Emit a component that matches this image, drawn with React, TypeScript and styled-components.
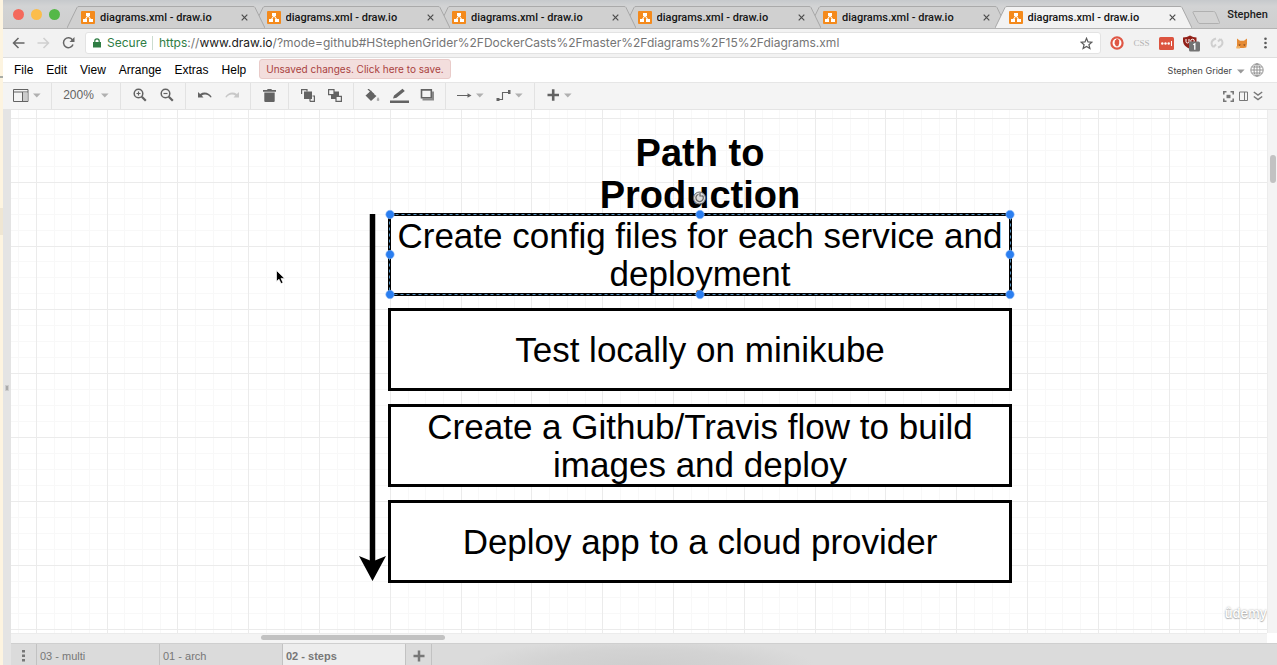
import React from 'react';
import styled, { createGlobalStyle } from 'styled-components';

const SANS = '"Liberation Sans", Arial, sans-serif';
const UI = 'Inter, "Liberation Sans", sans-serif';
const CHROME = 'Roboto, "Liberation Sans", sans-serif';

const GlobalStyle = createGlobalStyle`
  * { box-sizing: border-box; }
  body { margin: 0; background: #fff; font-family: ${SANS}; }
  button, input { font: inherit; color: inherit; border: 0; margin: 0; padding: 0; background: none; outline: 0; }
  svg { display: block; flex: none; }
`;

const Screen = styled.div`
  display: flex;
  height: 100vh;
  overflow: hidden;
`;

const DesktopEdge = styled.div`
  display: flex;
  flex-direction: column;
  width: 3px;
  flex: none;
  background: #fdf4e0;
`;

const EdgeRule = styled.div`
  height: 2px;
  margin-top: 76px;
  background: #a9aca6;
`;

const EdgeBand = styled.div`
  height: 27px;
  margin-top: 130px;
  background: #efe6d3;
`;

const Window = styled.div`
  display: flex;
  flex-direction: column;
  flex: 1;
  min-width: 0;
`;

/* ---------- browser tab strip ---------- */

const TabStrip = styled.header`
  display: flex;
  align-items: flex-end;
  height: 29px;
  flex: none;
  background: linear-gradient(#c6c9cc, #d2d3d4 6px, #cfcfcf);
  border-bottom: 1px solid #b4b4b4;
`;

const Lights = styled.div`
  display: flex;
  gap: 7px;
  width: 64px;
  padding: 0 0 8px 10px;
`;

const Light = styled.span<{ $color: string }>`
  width: 11px;
  height: 11px;
  border-radius: 50%;
  background: ${(p) => p.$color};
`;

const Tabs = styled.div`
  display: flex;
  flex: 1;
  min-width: 0;
`;

const Tab = styled.div<{ $active?: boolean; $order: number }>`
  display: flex;
  flex: 1;
  min-width: 0;
  position: relative;
  z-index: ${(p) => (p.$active ? 20 : p.$order)};
  margin-bottom: ${(p) => (p.$active ? '-1px' : '0')};
  color: ${(p) => (p.$active ? '#f2f2f2' : '#d0d0d0')};
  & + & { margin-left: -12px; }
`;

const TabBody = styled.div`
  display: flex;
  align-items: center;
  flex: 1;
  min-width: 0;
  height: 22px;
  padding: 0 2px;
  background: currentColor;
  border-top: 1px solid #aaa;
`;

const TabTitle = styled.span`
  flex: 1;
  min-width: 0;
  margin-left: 5px;
  overflow: hidden;
  white-space: nowrap;
  font: 500 11px/20px ${CHROME};
  color: #151515;
`;

const CloseButton = styled.button`
  display: flex;
  align-items: center;
  justify-content: center;
  width: 12px;
  height: 12px;
  color: #4c4c4c;
`;

const NewTab = styled.button`
  width: 30px;
  height: 20px;
`;

const Profile = styled.button`
  width: 55px;
  height: 26px;
  padding-right: 4px;
  font: 500 11px/24px ${CHROME};
  color: #1c1c1c;
`;

/* ---------- address bar ---------- */

const AddressBar = styled.div`
  display: flex;
  align-items: center;
  height: 29px;
  flex: none;
  background: #f2f2f2;
  border-bottom: 1px solid #dedede;
`;

const NavButton = styled.button<{ $muted?: boolean }>`
  display: flex;
  justify-content: center;
  width: 25px;
  color: ${(p) => (p.$muted ? '#cfcfcf' : '#666')};
`;

const NavGroup = styled.div`
  display: flex;
  width: 82px;
  padding-left: 3px;
`;

const UrlBox = styled.div`
  display: flex;
  align-items: center;
  flex: 1;
  min-width: 0;
  height: 22px;
  padding: 0 7px;
  background: #fff;
  border: 1px solid #e3e3e3;
  border-radius: 3px;
  font: 12px/20px ${UI};
  color: #757575;
`;

const Secure = styled.span`
  padding: 0 5px 0 6px;
  color: #2f7d44;
`;

const UrlDivider = styled.span`
  width: 1px;
  height: 14px;
  margin-right: 6px;
  background: #cbdccf;
`;

const Scheme = styled.span`color: #2f7d44;`;
const Host = styled.span`color: #1a1a1a;`;

const UrlInput = styled.input`
  flex: 1;
  min-width: 0;
  height: 20px;
`;

const Extensions = styled.div`
  display: flex;
  align-items: center;
  padding: 0 1px 0 3px;
`;

const ExtButton = styled.button`
  display: flex;
  align-items: center;
  justify-content: center;
  width: 25px;
  height: 24px;
  font: 9px/12px "Liberation Serif", serif;
  color: #b2b2b2;
`;

const MoreButton = styled(ExtButton)`width: 22px;`;

/* ---------- application menu ---------- */

const MenuBar = styled.nav`
  display: flex;
  align-items: center;
  height: 25px;
  flex: none;
  padding: 0 13px 0 11px;
  background: #fff;
  border-bottom: 1px solid #e6e6e6;
`;

const MenuItems = styled.div`
  display: flex;
  gap: 13px;
`;

const MenuButton = styled.button`
  font: 12px/22px ${SANS};
  color: #000;
`;

const SaveNotice = styled.button`
  height: 20px;
  margin: 0 auto 3px 13px;
  padding: 0 6px;
  background: #f3dedd;
  border: 1px solid #e9cbc9;
  border-radius: 3px;
  font: 10px/18px ${UI};
  color: #a9423f;
`;

const UserButton = styled.button`
  display: flex;
  align-items: center;
  gap: 5px;
  margin-right: 5px;
  padding-top: 2px;
  font: 9px/16px ${UI};
  color: #444;
`;

const IconButton = styled.button`
  display: flex;
  align-items: center;
  justify-content: center;
  color: #777;
`;

/* ---------- toolbar ---------- */

const Toolbar = styled.div`
  display: flex;
  height: 27px;
  flex: none;
  background: #f4f4f4;
  border-bottom: 1px solid #e4e4e4;
`;

const ToolGroup = styled.div<{ $last?: boolean }>`
  display: flex;
  padding: 0 5px;
  border-right: ${(p) => (p.$last ? '0' : '1px solid #e2e2e2')};
  &:first-child { padding: 0 5px 0 4px; }
`;

const Tool = styled.button<{ $size?: 'drop' | 'text'; $muted?: boolean }>`
  display: flex;
  align-items: center;
  justify-content: center;
  gap: ${(p) => (p.$size === 'text' ? '7px' : '4px')};
  width: ${(p) => (p.$size === 'drop' ? '39px' : p.$size === 'text' ? '58px' : '27px')};
  padding-bottom: 2px;
  font: 12px/20px ${SANS};
  color: ${(p) => (p.$muted ? '#c8c8c8' : '#636363')};
`;

const ViewTools = styled.div`
  display: flex;
  gap: 5px;
  margin-left: auto;
  padding-right: 14px;
`;

/* ---------- editor ---------- */

const Editor = styled.main`
  display: flex;
  flex: 1;
  min-height: 0;
`;

const SplitBar = styled.div`
  display: flex;
  align-items: center;
  justify-content: center;
  width: 8px;
  flex: none;
  background: #e4e4e4;
`;

const Grip = styled.span`
  width: 4px;
  height: 6px;
  background: #aaa;
  border: 1px solid #ccc;
`;

const Workspace = styled.div`
  display: flex;
  flex-direction: column;
  flex: 1;
  min-width: 0;
`;

const CanvasRow = styled.div`
  display: flex;
  flex: 1;
  min-height: 0;
`;

const Canvas = styled.section`
  position: relative;
  flex: 1;
  min-width: 0;
  overflow: hidden;
  background: #fff;
`;

const Layer = styled.svg`
  position: absolute;
  left: 0;
  top: 0;
  width: 100%;
  height: 100%;
  pointer-events: none;
`;

const Heading = styled.h1`
  position: absolute;
  left: 579px;
  top: 22px;
  width: 220px;
  margin: 0;
  text-align: center;
  font: bold 38px/42px ${SANS};
  color: #000;
`;

const Step = styled.div<{ $top: number }>`
  position: absolute;
  left: 377px;
  top: ${(p) => p.$top}px;
  display: flex;
  align-items: center;
  justify-content: center;
  width: 624px;
  height: 83px;
  background: #fff;
  border: 3px solid #000;
  text-align: center;
  font: 35px/38px ${SANS};
  color: #000;
`;

const Watermark = styled.span`
  position: absolute;
  right: 0;
  bottom: 10px;
  font: 500 13px/20px ${UI};
  color: #fff;
  text-shadow: 0 0 2px #999, 0 1px 1px #bbb;
`;

const VerticalTrack = styled.div`
  display: flex;
  justify-content: center;
  width: 10px;
  flex: none;
  padding-top: 45px;
  background: #f4f4f4;
  border-left: 1px solid #ececec;
`;

const HorizontalTrack = styled.div`
  display: flex;
  align-items: center;
  height: 10px;
  flex: none;
  margin-right: 10px;
  padding: 0 0 2px 250px;
  background: #f4f4f4;
  border-top: 1px solid #ececec;
`;

const Thumb = styled.span<{ $vertical?: boolean }>`
  width: ${(p) => (p.$vertical ? '6px' : '184px')};
  height: ${(p) => (p.$vertical ? '28px' : '5px')};
  border-radius: 3px;
  background: #c2c2c2;
`;

const PageBar = styled.footer`
  display: flex;
  height: 22px;
  flex: none;
  background: radial-gradient(ellipse 170px 26px at 50% 100%, #cecece, #d3d3d3 60%, #dbdbdb);
  border-top: 1px solid #cfcfcf;
`;

const PageTab = styled.button<{ $active?: boolean }>`
  width: 123px;
  padding: 2px 0 0 3px;
  background: ${(p) => (p.$active ? '#ededed' : '#dbdbdb')};
  border-right: 1px solid #c2c2c2;
  text-align: left;
  font: ${(p) => (p.$active ? 'bold' : 'normal')} 11px/18px ${SANS};
  color: #777;
`;

const PageTool = styled.button`
  display: flex;
  align-items: center;
  justify-content: center;
  width: 26px;
  padding-top: 2px;
  background: #dbdbdb;
  border-right: 1px solid #c2c2c2;
  color: #777;
`;

/* ---------- drawings ---------- */

const Caret = ({ color = '#b0b0b0' }: { color?: string }) => (
  <svg width="8" height="5"><path d="M0 .5h7.6L3.8 4.6z" fill={color} /></svg>
);

const Logo = () => (
  <svg width="14" height="13" viewBox="0 0 14 13">
    <rect width="14" height="13" rx="1" fill="#f48a1c" />
    <path d="M7 4.5 4 9M7 4.5 10 9" stroke="#fff" strokeWidth="1.1" />
    <path d="M5 2h4v3H5zM2 8h4v3H2zM8 8h4v3H8z" fill="#fff" />
  </svg>
);

const LeftSlope = () => (
  <svg width="12" height="22"><path d="M0 22 10 1.5Q10.500 .5 12 .5V22z" fill="currentColor" /><path d="M0 22 10 1.500Q10.500 .5 12 .5" fill="none" stroke="#a8a8a8" /></svg>
);

const RightSlope = () => (
  <svg width="12" height="22"><path d="M0 22V.5Q1.500 .5 2 1.500L12 22z" fill="currentColor" /><path d="M0 .5Q1.500 .5 2 1.500L12 22" fill="none" stroke="#a8a8a8" /></svg>
);

const Magnifier = ({ plus }: { plus?: boolean }) => (
  <svg width="14" height="14" fill="none" stroke="currentColor">
    <circle cx="5.500" cy="5.500" r="4.300" strokeWidth="1.500" />
    <path d="m8.800 8.800 4 4" strokeWidth="2.200" />
    <path d={plus ? 'M3.500 5.500h4M5.500 3.500v4' : 'M3.500 5.500h4'} strokeWidth="1.200" />
  </svg>
);

const Undo = ({ flip }: { flip?: boolean }) => (
  <svg width="14" height="9" viewBox="0 0 14 9">
    <g transform={flip ? 'matrix(-1 0 0 1 14 0)' : undefined}>
      <path d="M0 1v5.500h5.500L3.700 4.600C6.500 2.600 10.200 3.200 12.600 6.600l1.100-.6C11.300 1.700 6.200.2 2.100 3z" fill="currentColor" />
    </g>
  </svg>
);

const steps = [
  { top: 103, lines: ['Create config files for each service and', 'deployment'] },
  { top: 198, lines: ['Test locally on minikube'] },
  { top: 294, lines: ['Create a Github/Travis flow to build', 'images and deploy'] },
  { top: 390, lines: ['Deploy app to a cloud provider'] },
];

const handles = [379, 689, 999]
  .flatMap((x) => [104, 144, 184].map((y) => [x, y]))
  .filter(([x, y]) => x !== 689 || y !== 144);

const gridLines = (origin: number, pitch: number, count: number) =>
  Array.from({ length: count }, (_, i) => ({ at: Math.round(origin + i * pitch) + 0.5, major: i % 4 === 0 }));

const columns = gridLines(-46, 17.7, 160);
const rows = gridLines(-56, 15.96, 90);

const Grid = () => (
  <Layer>
    {[false, true].map((major) => (
      <g key={String(major)} stroke={major ? '#ebebeb' : '#f8f8f8'}>
        {columns.filter((c) => c.major === major).map((c) => <line key={`c${c.at}`} x1={c.at} x2={c.at} y1="0" y2="1500" />)}
        {rows.filter((r) => r.major === major).map((r) => <line key={`r${r.at}`} y1={r.at} y2={r.at} x1="0" x2="2900" />)}
      </g>
    ))}
  </Layer>
);

const Overlay = () => (
  <Layer>
    <path d="M361.500 104v350" stroke="#000" strokeWidth="5.500" />
    <path d="m361.500 471-13.500-25 13.500 5.500L375 446z" fill="#000" />
    <rect x="378.500" y="104.500" width="621" height="80" fill="none" stroke="#5590bd" strokeDasharray="3 3" />
    <circle cx="688.500" cy="88" r="6" fill="#ddd" stroke="#666" />
    <path d="M691.500 85.500a3.700 3.700 0 1 1-4-1.200M689 82.500v3.500h3" fill="none" stroke="#666" strokeWidth="1.200" />
    {handles.map(([x, y]) => <circle key={`${x}-${y}`} cx={x} cy={y + 0.5} r="4.200" fill="#2a7ef0" stroke="#8db9f5" strokeWidth=".6" />)}
    <path d="M265.500 160.500v11l2.500-2.300 2 4.400 2-.9-2-4.300h3.600z" fill="#000" stroke="#fff" strokeWidth=".7" />
  </Layer>
);

export default function App() {
  return (
    <Screen>
      <GlobalStyle />
      <DesktopEdge><EdgeRule /><EdgeBand /></DesktopEdge>
      <Window>
        <TabStrip>
          <Lights>
            <Light $color="#f4695c" /><Light $color="#fbbd4b" /><Light $color="#55b847" />
          </Lights>
          <Tabs role="tablist">
            {[0, 1, 2, 3, 4, 5].map((i) => (
              <Tab key={i} role="tab" aria-selected={i === 5} $active={i === 5} $order={10 - i}>
                <LeftSlope />
                <TabBody>
                  <Logo />
                  <TabTitle>diagrams.xml - draw.io</TabTitle>
                  <CloseButton aria-label="Close tab">
                    <svg width="7" height="7" stroke="currentColor" strokeWidth="1.200"><path d="m.7.7 5.600 5.600m0-5.600L.7 6.300" /></svg>
                  </CloseButton>
                </TabBody>
                <RightSlope />
              </Tab>
            ))}
          </Tabs>
          <NewTab aria-label="New tab">
            <svg width="28" height="14"><path d="M1.500.5h20q1.500 0 2 1.200l4 9.800q.5 1-1 1H8q-1.500 0-2-1.200L1.200 2Q.5.5 1.500.5z" fill="#d3d3d3" stroke="#b0b0b0" /></svg>
          </NewTab>
          <Profile>Stephen</Profile>
        </TabStrip>

        <AddressBar>
          <NavGroup>
            <NavButton aria-label="Back"><svg width="13" height="12" fill="none" stroke="currentColor" strokeWidth="1.500"><path d="M12.500 6H1.500M6.500 1l-5 5 5 5" /></svg></NavButton>
            <NavButton aria-label="Forward" $muted><svg width="13" height="12" fill="none" stroke="currentColor" strokeWidth="1.500"><path d="M.5 6h11M6.500 1l5 5-5 5" /></svg></NavButton>
            <NavButton aria-label="Reload"><svg width="13" height="12" fill="none" stroke="currentColor" strokeWidth="1.500"><path d="M10.500 3A4.900 4.900 0 1 0 11 7.500" /><path d="M12.500 0v5h-5z" fill="currentColor" stroke="none" /></svg></NavButton>
          </NavGroup>
          <UrlBox>
            <svg width="8" height="10"><path d="M0 4h8v5.500H0z" fill="#2f7d44" /><path d="M1.800 4.500V3a2.200 2.200 0 0 1 4.400 0v1.500" fill="none" stroke="#2f7d44" strokeWidth="1.200" /></svg>
            <Secure>Secure</Secure>
            <UrlDivider />
            <Scheme>https</Scheme>
            <span>://</span>
            <Host>www.draw.io</Host>
            <UrlInput aria-label="Address" defaultValue="/?mode=github#HStephenGrider%2FDockerCasts%2Fmaster%2Fdiagrams%2F15%2Fdiagrams.xml" />
            <IconButton aria-label="Bookmark">
              <svg width="13" height="13" viewBox="0 0 13 13" fill="none" stroke="#5a5a5a" strokeWidth="1.200"><path d="m6.500 1.300 1.500 3.600 3.900.3-3 2.500 1 3.800-3.400-2.100-3.400 2.100 1-3.800-3-2.500L5 4.900z" /></svg>
            </IconButton>
          </UrlBox>
          <Extensions>
            <ExtButton aria-label="Ad blocker">
              <svg width="14" height="14"><circle cx="7" cy="7" r="5.600" fill="#fff" stroke="#df5745" strokeWidth="2.200" /><path d="M4.500 7.500 5 4l1 .2.4-1.400 1.200.2.800.4.800.8v3.300l-1 2.800H6z" fill="#df5745" /></svg>
            </ExtButton>
            <ExtButton>CSS</ExtButton>
            <ExtButton aria-label="Password manager">
              <svg width="15" height="13"><rect width="15" height="13" rx="1.500" fill="#dc5440" /><circle cx="3.300" cy="6.500" r="1.200" fill="#fff" /><circle cx="6.500" cy="6.500" r="1.200" fill="#fff" /><circle cx="9.700" cy="6.500" r="1.200" fill="#fff" /><path d="M12.500 4v5" stroke="#fff" /></svg>
            </ExtButton>
            <ExtButton aria-label="Content blocker">
              <svg width="20" height="18" viewBox="0 0 20 18">
                <path d="M1 3.500Q5 3.500 8 1.500q3 2 6.500 2v4q-.5 4.500-6.500 7.500-6.500-3-7-7.500z" fill="#922018" />
                <path d="M4 5v2.500q0 1.500 1.500 1.500T7 7.500V5" fill="none" stroke="#fff" />
                <circle cx="10.500" cy="7" r="1.800" fill="none" stroke="#fff" />
                <rect x="7" y="7.500" width="11" height="10" rx="1.500" fill="#737373" />
                <path d="M11.200 10.800 12.800 9.800v6" fill="none" stroke="#fff" strokeWidth="1.300" />
              </svg>
            </ExtButton>
            <ExtButton aria-label="Sync">
              <svg width="14" height="12" fill="none" stroke="#cfcfcf" strokeWidth="2"><path d="M6 1.500Q1.500 3 1.500 6.500q0 2 2 3.500M8 10.500q4.500-1.500 4.500-5 0-2-2-3.500M3.500 10 6 7.500M10.500 2 8 4.500" /></svg>
            </ExtButton>
            <ExtButton aria-label="Wallet">
              <svg width="12" height="11"><path d="m1 .5 3 2.200h4L11 .5v5l-.7 4L7.500 10h-3L1 9.800V5.500z" fill="#e58b35" /><path d="M2.500 6.500h2.200L3.800 8zM7.300 6.500h2.200L8.200 8z" fill="#6d3d1d" /><path d="M0 8.500 4 8v2.500H.5z" fill="#f4b467" /></svg>
            </ExtButton>
            <MoreButton aria-label="More">
              <svg width="3" height="12" fill="#5a5a5a"><circle cx="1.500" cy="1.700" r="1.300" /><circle cx="1.500" cy="6" r="1.300" /><circle cx="1.500" cy="10.300" r="1.300" /></svg>
            </MoreButton>
          </Extensions>
        </AddressBar>

        <MenuBar>
          <MenuItems>
            {['File', 'Edit', 'View', 'Arrange', 'Extras', 'Help'].map((m) => <MenuButton key={m}>{m}</MenuButton>)}
          </MenuItems>
          <SaveNotice>Unsaved changes. Click here to save.</SaveNotice>
          <UserButton>Stephen Grider <Caret color="#999" /></UserButton>
          <IconButton aria-label="Language">
            <svg width="14" height="14" fill="none" stroke="#8a8a8a" strokeWidth=".9"><circle cx="7" cy="7" r="6.200" /><ellipse cx="7" cy="7" rx="3" ry="6.200" /><path d="M7 1v12M1 7h12M1.800 4h10.400M1.800 10h10.400" /></svg>
          </IconButton>
        </MenuBar>

        <Toolbar>
          <ToolGroup>
            <Tool $size="drop" aria-label="View"><svg width="16" height="13" fill="none" stroke="currentColor"><path d="M.5.5h14.500v12H.5zM.5 3h14.500M9.500 3v9.500" /><path d="M10 3.500h4.500V12H10z" fill="#ccc" stroke="none" /></svg><Caret /></Tool>
          </ToolGroup>
          <ToolGroup><Tool $size="text">200% <Caret /></Tool></ToolGroup>
          <ToolGroup>
            <Tool aria-label="Zoom in"><Magnifier plus /></Tool>
            <Tool aria-label="Zoom out"><Magnifier /></Tool>
          </ToolGroup>
          <ToolGroup>
            <Tool aria-label="Undo"><Undo /></Tool>
            <Tool aria-label="Redo" $muted><Undo flip /></Tool>
          </ToolGroup>
          <ToolGroup>
            <Tool aria-label="Delete"><svg width="13" height="13" fill="currentColor"><path d="M0 1h4l.7-1h3.600L9 1h4v1.700H0zM1.300 3.500h10.400V12q0 1-1 1H2.300q-1 0-1-1z" /></svg></Tool>
          </ToolGroup>
          <ToolGroup>
            <Tool aria-label="To front"><svg width="14" height="13"><path d="M.6 5V.6H6v2M9 12.400h4.400V7H11.500M9 12.400V10" fill="none" stroke="currentColor" strokeWidth="1.200" /><path d="M3 2.500h8V10H3z" fill="currentColor" /></svg></Tool>
            <Tool aria-label="To back"><svg width="14" height="13"><path d="M3 2.500h8V10H3z" fill="currentColor" /><path d="M.6.6H6v5H.6zM8 7.400h5.400v5H8z" fill="#f4f4f4" stroke="currentColor" strokeWidth="1.200" /></svg></Tool>
          </ToolGroup>
          <ToolGroup>
            <Tool aria-label="Fill color"><svg width="15" height="13"><path d="M5.500 2.500 11.500 7 6 12 .5 6.500z" fill="currentColor" /><path d="m3 0 6 5.500M2.500 6l4-4" fill="none" stroke="currentColor" strokeWidth="1.300" /><path d="M13 8q1.800 2.300 1.300 3.300t-1.300.7-1.300-.7T13 8z" fill="#aaa" /></svg></Tool>
            <Tool aria-label="Line color"><svg width="19" height="15" fill="currentColor"><path d="M0 12.500h19V15H0zM3 10.500l1-3L12.500.8l2.300 2.100L6.500 9.700z" /></svg></Tool>
            <Tool aria-label="Shadow"><svg width="14" height="12" fill="none" stroke="currentColor"><path d="M2.500 10.500h10.500v-8" strokeWidth="2" stroke="#8a8a8a" /><path d="M1.500.9h9.800v7.800H1.500z" strokeWidth="1.600" /></svg></Tool>
          </ToolGroup>
          <ToolGroup>
            <Tool $size="drop" aria-label="Connection"><svg width="15" height="7"><path d="M0 3.500h12" stroke="currentColor" /><path d="m14.500 3.500-4-2.300v4.600z" fill="currentColor" /></svg><Caret /></Tool>
            <Tool $size="drop" aria-label="Waypoints"><svg width="15" height="13"><path d="M2 10.500h4.500v-7H13" fill="none" stroke="currentColor" strokeWidth="1.100" /><path d="M.5 9h3v3h-3zM12 1h2.500v4H12z" fill="currentColor" /></svg><Caret /></Tool>
          </ToolGroup>
          <ToolGroup $last>
            <Tool $size="drop" aria-label="Insert"><svg width="13" height="12" stroke="currentColor" strokeWidth="2.600"><path d="M.5 6h11.500M6.200.3v11.400" /></svg><Caret /></Tool>
          </ToolGroup>
          <ViewTools>
            <IconButton aria-label="Fullscreen"><svg width="11" height="11" fill="none" stroke="currentColor" strokeWidth="1.600"><path d="M.8 3.500V.8h2.700M7.500.8h2.700v2.700M10.200 7.500v2.700H7.500M3.500 10.200H.8V7.500" /><path d="M3.500 3.800h4v3.400h-4z" fill="currentColor" stroke="none" /></svg></IconButton>
            <IconButton aria-label="Format"><svg width="9" height="10" fill="none" stroke="currentColor"><path d="M.5 1h8v8.500h-8zM5.500 1v8.500" /></svg></IconButton>
            <IconButton aria-label="Collapse"><svg width="10" height="10" fill="none" stroke="currentColor" strokeWidth="1.500"><path d="m.8 1 4.200 3L9.200 1M.8 5.500l4.200 3 4.200-3" /></svg></IconButton>
          </ViewTools>
        </Toolbar>

        <Editor>
          <SplitBar><Grip /></SplitBar>
          <Workspace>
            <CanvasRow>
              <Canvas>
                <Grid />
                <Heading>Path to Production</Heading>
                {steps.map((s) => (
                  <Step key={s.top} $top={s.top}>
                    <div>{s.lines.map((l) => <div key={l}>{l}</div>)}</div>
                  </Step>
                ))}
                <Overlay />
                <Watermark>ûdemy</Watermark>
              </Canvas>
              <VerticalTrack><Thumb $vertical /></VerticalTrack>
            </CanvasRow>
            <HorizontalTrack><Thumb /></HorizontalTrack>
            <PageBar>
              <PageTool aria-label="Pages"><svg width="3" height="12" fill="currentColor"><path d="M0 0h3v2.500H0zM0 4.500h3V7H0zM0 9h3v2.500H0z" /></svg></PageTool>
              <PageTab>03 - multi</PageTab>
              <PageTab>01 - arch</PageTab>
              <PageTab $active>02 - steps</PageTab>
              <PageTool aria-label="Insert page"><svg width="12" height="12" stroke="currentColor" strokeWidth="2.500"><path d="M.5 6h11M6 .5v11" /></svg></PageTool>
            </PageBar>
          </Workspace>
        </Editor>
      </Window>
    </Screen>
  );
}
